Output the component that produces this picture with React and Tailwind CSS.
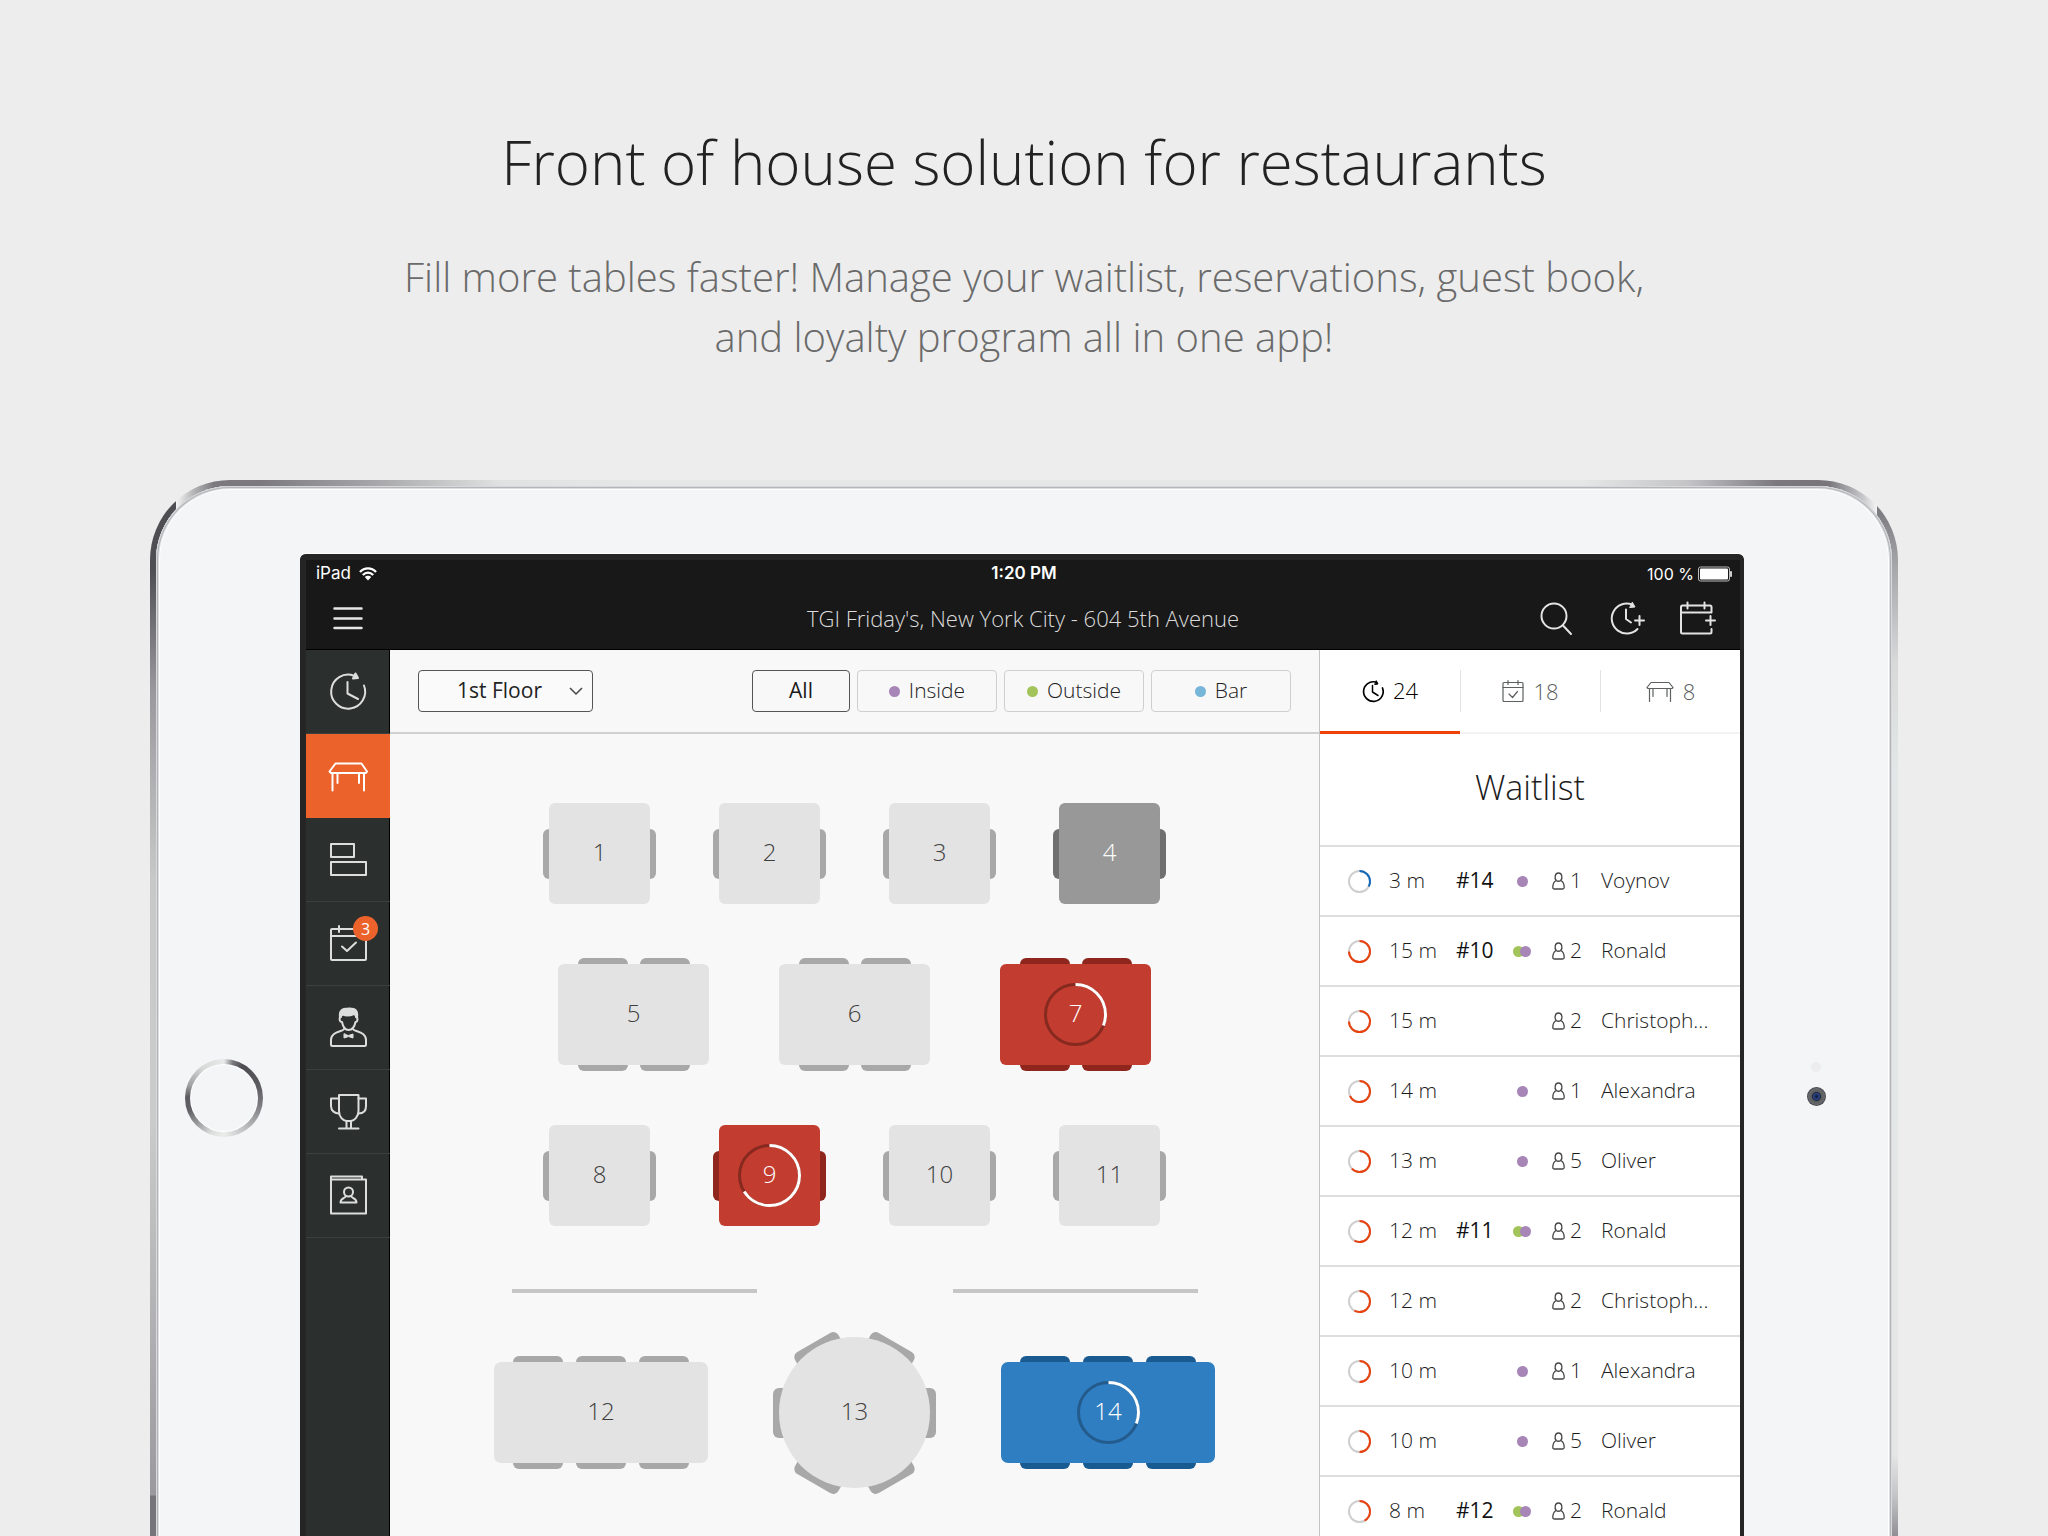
import React from "react";

const NAV = [
  { id: "waitlist", label: "Waitlist" },
  { id: "tables", label: "Tables", active: true },
  { id: "timeline", label: "Timeline" },
  { id: "reservations", label: "Reservations", badge: 3 },
  { id: "staff", label: "Staff" },
  { id: "loyalty", label: "Loyalty" },
  { id: "guestbook", label: "Guest book" },
];

const AREAS = [
  { label: "Inside", dot: "bg-[#a785b7]" },
  { label: "Outside", dot: "bg-[#a2c45a]" },
  { label: "Bar", dot: "bg-[#77b5d9]" },
];

const GUESTS = [
  { time: "3 m", part: 0.33, fresh: true, table: "#14", dots: ["inside"], size: 1, name: "Voynov" },
  { time: "15 m", part: 0.75, table: "#10", dots: ["outside", "inside"], size: 2, name: "Ronald" },
  { time: "15 m", part: 0.75, dots: [], size: 2, name: "Christoph..." },
  { time: "14 m", part: 0.68, dots: ["inside"], size: 1, name: "Alexandra" },
  { time: "13 m", part: 0.63, dots: ["inside"], size: 5, name: "Oliver" },
  { time: "12 m", part: 0.58, table: "#11", dots: ["outside", "inside"], size: 2, name: "Ronald" },
  { time: "12 m", part: 0.58, dots: [], size: 2, name: "Christoph..." },
  { time: "10 m", part: 0.5, dots: ["inside"], size: 1, name: "Alexandra" },
  { time: "10 m", part: 0.5, dots: ["inside"], size: 5, name: "Oliver" },
  { time: "8 m", part: 0.42, table: "#12", dots: ["outside", "inside"], size: 2, name: "Ronald" },
];

const TONES = {
  free: { top: "bg-[#e3e3e3] text-[#3f3f3f]", chair: "bg-[#a8a8a8]" },
  held: { top: "bg-[#989898] text-white", chair: "bg-[#6f6f6f]" },
  red: { top: "bg-[#c23c30] text-white", chair: "bg-[#8e261e]", track: "#86291f" },
  blue: { top: "bg-[#307ec2] text-white", chair: "bg-[#195a91]", track: "#235b8c" },
};

function Ring({ size, width, part, color, track, className }) {
  const c = size / 2;
  return (
    <svg width={size} height={size} className={className} fill="none" strokeWidth={width} aria-hidden="true">
      <circle cx={c} cy={c} r={c - width / 2} stroke={track} />
      <circle
        cx={c}
        cy={c}
        r={c - width / 2}
        stroke={color}
        pathLength="100"
        strokeDasharray={`${part * 100} 100`}
        transform={`rotate(-90 ${c} ${c})`}
      />
    </svg>
  );
}

function NavIcon({ id }) {
  return (
    <svg width="84" height="84" viewBox="0 0 84 84" fill="none" stroke="currentColor" strokeWidth="2" strokeLinecap="round" strokeLinejoin="round" aria-hidden="true">
      {id === "waitlist" && (
        <>
          <path d="M58 35.5A17 17 0 1 1 48 25.7" />
          <path d="M41.5 32v11.5L52 49" />
          <path d="M49.5 23.5L52 28L47 28.5Z" fill="currentColor" />
        </>
      )}
      {id === "tables" && (
        <>
          <path d="M29.5 29.5h26l5.5 8-1 1.5H25l-1.500-1.500Z" />
          <path d="M26.500 39.500V56.500M58 39.500V56.500M31.500 39.500V49M53 39.500V49" />
        </>
      )}
      {id === "timeline" && (
        <>
          <rect x="25" y="26" width="23" height="13" />
          <rect x="25" y="44" width="35" height="13" />
        </>
      )}
      {id === "reservations" && (
        <>
          <rect x="25" y="27" width="35" height="31" rx="1" />
          <path d="M25 34h35M33 24v6M52 24v6M36 44.500l5 4.500l9-8.500" />
        </>
      )}
      {id === "staff" && (
        <>
          <path d="M34 31C33 25 36 22.500 42 22.500C50 22 52 25 51 31.500C49 30 50 28.500 48 28C43 30 39 29.500 37 28.500C35.500 29 35.500 30 34 31Z" fill="currentColor" />
          <path d="M35 31C33 31 33 36 36 36C37 41 39 44 42.500 44C46 44 48.500 41 49.500 36C52 36 52 31 50 31" />
          <path d="M38 43C37 46 25 45 25 54V58.500Q25 60 26.500 60H58.500Q60 60 60 58.500V54C60 45 48 46 47 43" />
          <path d="M38 48v4l4.500-1.500l4.500 1.500v-4l-4.500 1.500Z" fill="currentColor" strokeWidth="1" />
        </>
      )}
      {id === "loyalty" && (
        <>
          <path d="M33 25H52.500V41C52.500 47 48 50.500 45 51H40.500C37 50.500 33 47 33 41Z" />
          <path d="M33 28.500H25V36C25 41 29 43.500 33 43.500M52.500 28.500H60V36C60 41 57 43.500 52.500 43.500" />
          <path d="M40.500 51v7M45 51v7M33 58.500h19.500" />
        </>
      )}
      {id === "guestbook" && (
        <>
          <path d="M25 25.500H60V59.500H25V22.500H56V25" />
          <circle cx="42.500" cy="38" r="4.500" />
          <path d="M40 42C39 44.500 34.500 44 34.500 48.500H50.500C50.500 44 46 44.500 45 42" />
        </>
      )}
    </svg>
  );
}

function TabIcon({ id }) {
  return (
    <svg width={id === "tables" ? 28 : 22} height="24" viewBox={id === "tables" ? "0 0 28 24" : "0 0 22 24"} fill="none" stroke="currentColor" strokeWidth="1.200" strokeLinecap="round" strokeLinejoin="round" aria-hidden="true">
      {id === "waitlist" && (
        <g strokeWidth="1.700">
          <path d="M20.500 9A9.800 9.800 0 1 1 13.500 3" />
          <path d="M10.500 6.500V13L16 16.500" strokeWidth="1.500" />
          <path d="M14.500 2l1.500 3l-3 .5Z" fill="currentColor" strokeWidth="1" />
        </g>
      )}
      {id === "reservations" && (
        <>
          <rect x="1" y="3.500" width="20" height="19" rx="1" />
          <path d="M1 8.500h20M6 1.500v4M16 1.500v4M7 15l3.500 3.500L15.500 12.500" />
        </>
      )}
      {id === "tables" && (
        <>
          <path d="M5 3.500h18l4 5l-1 1H2L1 8.500Z" />
          <path d="M3.500 9.500v13M24.500 9.500v13M7 9.500v8M21 9.500v8" />
        </>
      )}
    </svg>
  );
}

function Chairs({ count, tone }) {
  return (
    <div className={count === 3 ? "flex justify-center gap-[13px]" : "flex justify-center gap-3"}>
      {Array.from({ length: count }, (_, i) => (
        <span key={i} className={`h-[18px] w-[50px] rounded-[6px] ${tone.chair}`} />
      ))}
    </div>
  );
}

function TableTop({ n, tone, part, className }) {
  return (
    <button type="button" aria-label={`Table ${n}`} className={`relative flex items-center justify-center pb-[3px] text-2xl leading-none font-light ${tone.top} ${className}`}>
      {part !== undefined && (
        <Ring size={63} width={3} part={part} color="#ffffff" track={tone.track} className="absolute inset-0 m-auto" />
      )}
      <span className="relative">{n}</span>
    </button>
  );
}

function SquareTable({ n, state = "free", part }) {
  const tone = TONES[state];
  return (
    <div className="-mx-[6px] flex items-center">
      <span className={`-mr-3 h-[50px] w-[18px] rounded-[6px] ${tone.chair}`} />
      <TableTop n={n} tone={tone} part={part} className="size-[101px] rounded-[6px]" />
      <span className={`-z-10 -ml-3 h-[50px] w-[18px] rounded-[6px] ${tone.chair}`} />
    </div>
  );
}

function LongTable({ n, seats, state = "free", part }) {
  const tone = TONES[state];
  return (
    <div className="-my-[6px] flex flex-col">
      <Chairs count={seats} tone={tone} />
      <TableTop n={n} tone={tone} part={part} className={seats === 3 ? "-my-3 h-[101px] w-[214px] rounded-[7px]" : "-my-3 h-[101px] w-[151px] rounded-[6px]"} />
      <div className="-z-10">
        <Chairs count={seats} tone={tone} />
      </div>
    </div>
  );
}

function RoundTable({ n }) {
  return (
    <div className="relative flex size-[151px] items-center justify-center">
      <span className="absolute h-[50px] w-[163px] rounded-[6px] bg-[#a8a8a8]" />
      <span className="absolute h-[50px] w-[163px] rotate-60 rounded-[6px] bg-[#a8a8a8]" />
      <span className="absolute h-[50px] w-[163px] -rotate-60 rounded-[6px] bg-[#a8a8a8]" />
      <TableTop n={n} tone={TONES.free} className="size-full rounded-full" />
    </div>
  );
}

function StatusBar() {
  return (
    <div className="grid h-7 grid-cols-3 items-center pr-2 pl-[10px] font-[Inter,sans-serif] text-[17px] text-white">
      <div className="flex items-center gap-2">
        iPad
        <svg width="18" height="14" viewBox="0 0 18 14" fill="none" stroke="currentColor" strokeWidth="2.400" aria-hidden="true">
          <path d="M1 5C5.500 .2 12.500 .2 17 5M3.800 8C7 4.800 11 4.800 14.200 8" />
          <path d="M9 13.500L5.800 10C7.500 8.200 10.500 8.200 12.200 10Z" fill="currentColor" stroke="none" />
        </svg>
      </div>
      <div className="text-center font-semibold">1:20 PM</div>
      <div className="flex items-center justify-end gap-1 text-base">
        100 %
        <svg width="34" height="16" viewBox="0 0 34 16" fill="none" aria-hidden="true">
          <rect x=".5" y="1" width="31" height="14" rx="2" stroke="#bbb" />
          <rect x="2" y="2.500" width="28" height="11" rx="1" fill="#fff" />
          <path d="M32.500 5.500h1v5h-1z" fill="#ccc" stroke="#ccc" />
        </svg>
      </div>
    </div>
  );
}

function Header() {
  return (
    <header className="h-[90px] shrink-0 border-b border-black bg-[#181818]">
      <StatusBar />
      <div className="grid h-[60px] grid-cols-[1fr_auto_1fr] items-center px-6">
        <button type="button" aria-label="Menu" className="w-9">
          <svg width="36" height="24" viewBox="0 0 36 24" fill="none" stroke="#e6e6e6" strokeWidth="2.500" strokeLinecap="round" aria-hidden="true">
            <path d="M4.500 2.500h27M4.500 12.500h27M4.500 22h27" />
          </svg>
        </button>
        <h2 className="text-[22px] font-light text-[#dcdcdc]">TGI Friday's, New York City - 604 5th Avenue</h2>
        <div className="flex justify-end gap-[30px] text-[#e3e3e3]">
          <button type="button" aria-label="Search">
            <svg width="40" height="40" fill="none" stroke="currentColor" strokeWidth="2" strokeLinecap="round" aria-hidden="true">
              <circle cx="18" cy="18" r="12.500" />
              <path d="M27 27.500l8 8.500" />
            </svg>
          </button>
          <button type="button" aria-label="Add to waitlist">
            <svg width="40" height="40" fill="none" stroke="currentColor" strokeWidth="2" strokeLinecap="round" strokeLinejoin="round" aria-hidden="true">
              <path d="M26 6.500A15 15 0 1 0 31.500 31M20 11.500V21l5 3.500M33.500 18v9M29 22.500h9" />
              <path d="M26.500 4.500l2.500 4.500l-5 .5Z" fill="currentColor" strokeWidth="1" />
            </svg>
          </button>
          <button type="button" aria-label="Add reservation">
            <svg width="40" height="40" fill="none" stroke="currentColor" strokeWidth="2" strokeLinecap="round" strokeLinejoin="round" aria-hidden="true">
              <path d="M35.500 31V34Q35.500 35.500 34 35.500H6.500Q5 35.500 5 34V9Q5 7.500 6.500 7.500H34Q35.500 7.500 35.500 9V14.500H5M11.500 4.500v6M28.500 4.500v6M34.500 18v9M30 22.500h9" />
            </svg>
          </button>
        </div>
      </div>
    </header>
  );
}

function Sidebar() {
  return (
    <nav className="w-[84px] shrink-0 bg-[#2b302f] text-[#dcdedd] shadow-[inset_-1px_0_0_#000000]">
      {NAV.map((item) => (
        <button
          key={item.id}
          type="button"
          aria-label={item.label}
          className={
            item.active
              ? "relative block h-[84px] w-full bg-[#eb632b] text-white"
              : "relative block h-[84px] w-full border-b border-[#3b403f]"
          }
        >
          <NavIcon id={item.id} />
          {item.badge && (
            <span className="absolute top-[14px] left-[47px] flex size-[25px] items-center justify-center rounded-full bg-[#eb632b] text-base text-white">
              {item.badge}
            </span>
          )}
        </button>
      ))}
    </nav>
  );
}

function Toolbar() {
  return (
    <div className="flex h-[84px] items-center justify-between border-b-2 border-[#d0d0d0] px-7 text-[21px]">
      <div className="relative flex items-center">
        <select aria-label="Floor" className="h-[42px] w-[175px] appearance-none rounded-[4px] border border-[#555555] bg-[#fafafa] pr-3 text-center text-[#222]">
          <option>1st Floor</option>
        </select>
        <svg className="pointer-events-none absolute right-[10px]" width="14" height="10" fill="none" stroke="#444" strokeWidth="1.500" aria-hidden="true">
          <path d="M1 2l6 6l6-6" />
        </svg>
      </div>
      <div className="flex gap-[7px]">
        <button type="button" className="h-[42px] w-[98px] rounded-[4px] border border-[#555555] text-[#1a1a1a]">
          All
        </button>
        {AREAS.map((area) => (
          <button key={area.label} type="button" className="flex h-[42px] w-[140px] items-center justify-center gap-[9px] rounded-[4px] border border-[#cfcfcf] font-light text-[#222222]">
            <span className={`size-[11px] rounded-full ${area.dot}`} />
            {area.label}
          </button>
        ))}
      </div>
    </div>
  );
}

function FloorPlan() {
  return (
    <div className="isolate flex flex-col items-center gap-[60px] pt-[69px]">
      <div className="flex gap-[69px]">
        <SquareTable n={1} />
        <SquareTable n={2} />
        <SquareTable n={3} />
        <SquareTable n={4} state="held" />
      </div>
      <div className="flex gap-[70px]">
        <LongTable n={5} seats={2} />
        <LongTable n={6} seats={2} />
        <LongTable n={7} seats={2} state="red" part={0.31} />
      </div>
      <div className="flex gap-[69px]">
        <SquareTable n={8} />
        <SquareTable n={9} state="red" part={0.66} />
        <SquareTable n={10} />
        <SquareTable n={11} />
      </div>
      <div className="flex flex-col items-center gap-[44px]">
        <div className="flex gap-[196px] pt-[3px]">
          <span className="h-1 w-[245px] bg-[#c6c6c6]" />
          <span className="h-1 w-[245px] bg-[#c6c6c6]" />
        </div>
        <div className="flex items-center gap-[71px]">
          <LongTable n={12} seats={3} />
          <RoundTable n={13} />
          <LongTable n={14} seats={3} state="blue" part={0.31} />
        </div>
      </div>
    </div>
  );
}

function Tab({ id, count, active, first }) {
  return (
    <button
      type="button"
      role="tab"
      aria-selected={active}
      className={
        active
          ? "flex flex-1 items-center border-b-[3px] border-[#ee4208] font-light text-black"
          : "flex flex-1 items-center border-b-2 border-[#f3f3f3] font-light text-[#5c6060]"
      }
    >
      <span className={first ? "flex h-[42px] flex-1 items-center justify-center gap-[9px]" : "flex h-[42px] flex-1 items-center justify-center gap-[9px] border-l border-[#e2e2e2]"}>
        <TabIcon id={id} />
        {count}
      </span>
    </button>
  );
}

function Waitlist() {
  return (
    <aside className="flex w-[421px] shrink-0 flex-col overflow-hidden border-l border-[#c4c4c4] bg-white">
      <div role="tablist" className="flex h-[84px] shrink-0 text-[22px]">
        <Tab id="waitlist" count={24} active first />
        <Tab id="reservations" count={18} />
        <Tab id="tables" count={8} />
      </div>
      <h3 className="flex h-[111px] shrink-0 items-center justify-center pb-1 text-[34px] font-light text-[#1c1c1c]">Waitlist</h3>
      <ul className="shrink-0 text-[21px]">
        {GUESTS.map((g, i) => (
          <li key={i} className="grid h-[70px] grid-cols-[41px_67px_52px_44px_18px_31px_1fr] items-center border-t-2 border-[#dedede] pl-7 font-light text-[#1c1c1c]">
            <Ring size={23} width={2} part={g.part} color={g.fresh ? "#1268b8" : "#e8420f"} track="#cfcfcf" />
            <span>{g.time}</span>
            <span className="font-normal text-[#111]">{g.table}</span>
            <span className="flex w-7 justify-center">
              {g.dots.map((d, k) => (
                <span
                  key={d}
                  className={`size-[11px] rounded-full ${d === "inside" ? "bg-[#a785b7]" : "bg-[#a2c45a]"} ${k > 0 ? "-ml-1" : ""}`}
                />
              ))}
            </span>
            <svg width="13" height="18" fill="none" stroke="#444" strokeWidth="1.300" strokeLinejoin="round" aria-hidden="true">
              <path d="M4.300 8.500C2 6 3 1 6.500 1C10 1 11 6 8.700 8.500C11 9.500 12.200 12 12.200 15.500Q12.200 17 10.500 17H2.500Q.8 17 .8 15.500C.8 12 2 9.500 4.300 8.500Q6.500 10 8.700 8.500" />
            </svg>
            <span>{g.size}</span>
            <span className="truncate">{g.name}</span>
          </li>
        ))}
      </ul>
    </aside>
  );
}

export default function App() {
  return (
    <div className="flex h-screen flex-col overflow-hidden bg-[#ededed] font-['Open_Sans',sans-serif]">
      <div className="flex h-[480px] shrink-0 flex-col items-center pt-[120px] text-center font-light">
        <h1 className="text-[60px] leading-[84px] text-[#222]">Front of house solution for restaurants</h1>
        <p className="mt-[43px] text-[40px] leading-[60px] text-[#6a6a6a]">
          Fill more tables faster! Manage your waitlist, reservations, guest book,
          <br />
          and loyalty program all in one app!
        </p>
      </div>

      <div className="mx-[150px] -mb-2 flex min-h-0 flex-1 rounded-t-[80px] px-[6px] pt-[6px] [background:linear-gradient(180deg,#4e4e52_0px,#505054_70px,#9a989c_190px,#c8c8c8_380px,#cbcbcb_620px,#9b999d_995px,#77757a_996px,#77757a_1044px)_0px_20px/26px_100%_no-repeat,linear-gradient(180deg,#77757a_0px,#a5a5a8_60px,#d8dada_160px,#e4e7e7_270px,#e5e7e7_950px,#c4c4c6_992px,#8c8a8f_1036px)_100%_24px/21px_100%_no-repeat,linear-gradient(90deg,#f4f4f4_26px,#b4b4b6_44px,#7b797e_64px,#7b797e_110px,#a9a9ab_230px,#e0e2e1_350px,#e5e7e6_480px,#e5e7e6_82%,#c4c4c6_88%,#7b797e_93%,#77757a_96%,#c8c8ca_98%,#ffffff_99%)]">
        <div className="flex min-h-0 flex-1 items-stretch rounded-t-[74px] bg-[#f3f5f7] shadow-[inset_0_0_0_1px_#d6d8da,inset_0_0_0_2px_#b4b5b8,inset_0_0_0_3px_#dcdee1,inset_0_0_0_4px_#ffffff]">
          <div className="w-[144px] shrink-0 pt-[573px] pl-[29px]">
            <button type="button" aria-label="Home" className="size-[78px] rounded-full bg-[conic-gradient(#e8eae9_0deg,#7b797e_14deg,#4c4c50_30deg,#5c5b5f_70deg,#7b797e_100deg,#b8b8ba_140deg,#ebedec_180deg,#dcdedd_200deg,#a5a5a7_222deg,#626166_250deg,#5c5b5f_272deg,#a0a0a2_290deg,#d8dada_325deg,#e8eae9_360deg)] p-[6px]">
              <span className="block size-full rounded-full bg-[#f3f5f7] shadow-[0_0_0_1px_#ffffff]" />
            </button>
          </div>

          <main className="mt-[67px] flex min-w-0 flex-1 flex-col overflow-hidden rounded-t-[6px] border-t border-white">
            <div className="flex min-h-0 flex-1 flex-col rounded-t-[5px] bg-[#252525] pt-[6px] pr-1 pl-[6px]">
              <Header />
              <div className="flex min-h-0 flex-1">
                <Sidebar />
                <section className="min-w-0 flex-1 bg-[#f8f8f8]">
                  <Toolbar />
                  <FloorPlan />
                </section>
                <Waitlist />
              </div>
            </div>
          </main>

          <div className="flex w-[148px] shrink-0 flex-col items-center gap-[15px] pt-[576px] pr-1">
            <span className="size-[10px] rounded-full bg-[#ececee]" />
            <span className="size-[19px] rounded-full bg-[radial-gradient(circle,#10152c_0px,#2c468c_3px,#20253c_4px,#5a5c60_5px,#66686b_8px,#45474a_9px)]" />
          </div>
        </div>
      </div>
    </div>
  );
}
